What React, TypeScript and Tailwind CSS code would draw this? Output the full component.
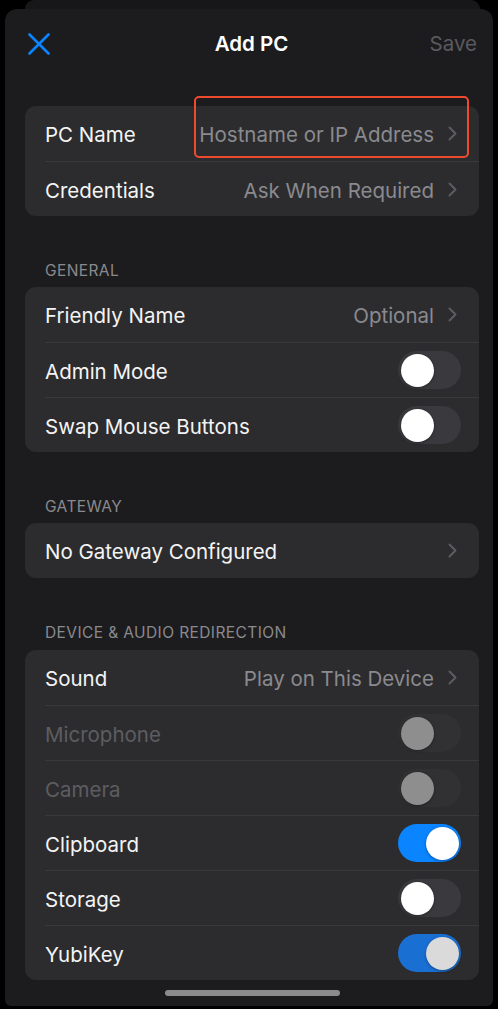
import React from 'react';

type Row =
  | { kind: 'link'; label: string; value?: string }
  | { kind: 'toggle'; label: string; state: 'on' | 'off' | 'disabled' | 'dim' };

function Chevron() {
  return (
    <svg width="9" height="15" viewBox="0 0 9 15" fill="none" className="shrink-0">
      <path d="M1.5 1.5L7.5 7.5L1.5 13.5" stroke="#5c5c61" strokeWidth="2" strokeLinecap="round" strokeLinejoin="round" />
    </svg>
  );
}

function Toggle({ state }: { state: 'on' | 'off' | 'disabled' | 'dim' }) {
  const track =
    state === 'on'
      ? 'bg-[#0a84ff] justify-end'
      : state === 'dim'
        ? 'bg-[#1a6fd3] justify-end'
        : state === 'disabled'
          ? 'bg-[#313133] justify-start'
          : 'bg-[#3a3a3e] justify-start';
  const knob =
    state === 'disabled' ? 'bg-[#8e8e8f]' : state === 'dim' ? 'bg-[#dadada]' : 'bg-white';
  return (
    <div className={`flex items-center w-[63px] h-[38px] rounded-full p-[2.5px] shrink-0 ${track}`}>
      <div className={`w-[33px] h-[33px] rounded-full shadow-[0_1px_3px_rgba(0,0,0,0.35)] ${knob}`} />
    </div>
  );
}

function Group({ rows }: { rows: Row[] }) {
  return (
    <div className="ml-[20px] mr-[14px] rounded-[11px] bg-[#2c2c2e] overflow-hidden">
      {rows.map((r, i) => {
        const muted = r.kind === 'toggle' && r.state === 'disabled';
        return (
          <div key={r.label} className="pl-[20px]">
            <div
              className={`flex items-center justify-between h-[55px] ${
                i > 0 ? 'border-t border-[#39393b]' : ''
              } ${r.kind === 'link' ? 'pr-[22px]' : 'pr-[18px]'}`}
            >
              <span className={`pt-[4px] ${muted ? 'text-[#5d5d61]' : 'text-[#f4f4f5]'}`}>{r.label}</span>
              {r.kind === 'link' ? (
                <div className="flex items-center gap-[14px]">
                  {r.value && <span className="pt-[4px] text-[#8a8a8f]">{r.value}</span>}
                  <Chevron />
                </div>
              ) : (
                <Toggle state={r.state} />
              )}
            </div>
          </div>
        );
      })}
    </div>
  );
}

function SectionLabel({ children }: { children: React.ReactNode }) {
  return (
    <div className="ml-[40px] pt-[45px] pb-[6px] text-[15.5px] leading-[20px] text-[#8a8a8e] uppercase tracking-[0.4px]">
      {children}
    </div>
  );
}

export default function App() {
  return (
    <div
      className="w-[498px] h-[1009px] bg-black overflow-hidden flex flex-col pb-[3px] text-[20.5px]"
      style={{ fontFamily: 'Inter, "Liberation Sans", sans-serif' }}
    >
      {/* sheet behind */}
      <div className="ml-[25px] mr-[18px] h-[9px] shrink-0 rounded-t-[10px] bg-[#171719]" />

      {/* Sheet */}
      <div className="ml-[5px] mr-[5px] flex-1 flex flex-col rounded-t-[12px] rounded-b-[6px] bg-[#1c1c1e]">
        {/* Header */}
        <div className="ml-[20px] mr-[15px] h-[70px] grid grid-cols-3 items-center shrink-0">
          <div className="pl-[3px]">
            <svg width="22" height="22" viewBox="0 0 22 22" fill="none">
              <path d="M1.5 1.5L20.5 20.5M20.5 1.5L1.5 20.5" stroke="#0a84ff" strokeWidth="2.6" strokeLinecap="round" />
            </svg>
          </div>
          <div className="text-center font-semibold text-white">Add PC</div>
          <div className="text-right text-[#5a5a5e] pr-[1px]">Save</div>
        </div>

        {/* Connection */}
        <div className="relative mt-[27px]">
          <Group
            rows={[
              { kind: 'link', label: 'PC Name', value: 'Hostname or IP Address' },
              { kind: 'link', label: 'Credentials', value: 'Ask When Required' },
            ]}
          />
          <div className="absolute left-[189px] top-[-10px] w-[275px] h-[62px] rounded-[5px] border-[2.5px] border-[#ef4a2d]" />
        </div>

        <SectionLabel>General</SectionLabel>
        <Group
          rows={[
            { kind: 'link', label: 'Friendly Name', value: 'Optional' },
            { kind: 'toggle', label: 'Admin Mode', state: 'off' },
            { kind: 'toggle', label: 'Swap Mouse Buttons', state: 'off' },
          ]}
        />

        <SectionLabel>Gateway</SectionLabel>
        <Group rows={[{ kind: 'link', label: 'No Gateway Configured' }]} />

        <SectionLabel>Device &amp; Audio Redirection</SectionLabel>
        <div className="mt-[1px]">
          <Group
            rows={[
              { kind: 'link', label: 'Sound', value: 'Play on This Device' },
              { kind: 'toggle', label: 'Microphone', state: 'disabled' },
              { kind: 'toggle', label: 'Camera', state: 'disabled' },
              { kind: 'toggle', label: 'Clipboard', state: 'on' },
              { kind: 'toggle', label: 'Storage', state: 'off' },
              { kind: 'toggle', label: 'YubiKey', state: 'dim' },
            ]}
          />
        </div>

        {/* Home indicator */}
        <div className="ml-[160px] mt-[10px] w-[175px] h-[6px] rounded-full bg-[#8b8b8d]" />
      </div>
    </div>
  );
}
